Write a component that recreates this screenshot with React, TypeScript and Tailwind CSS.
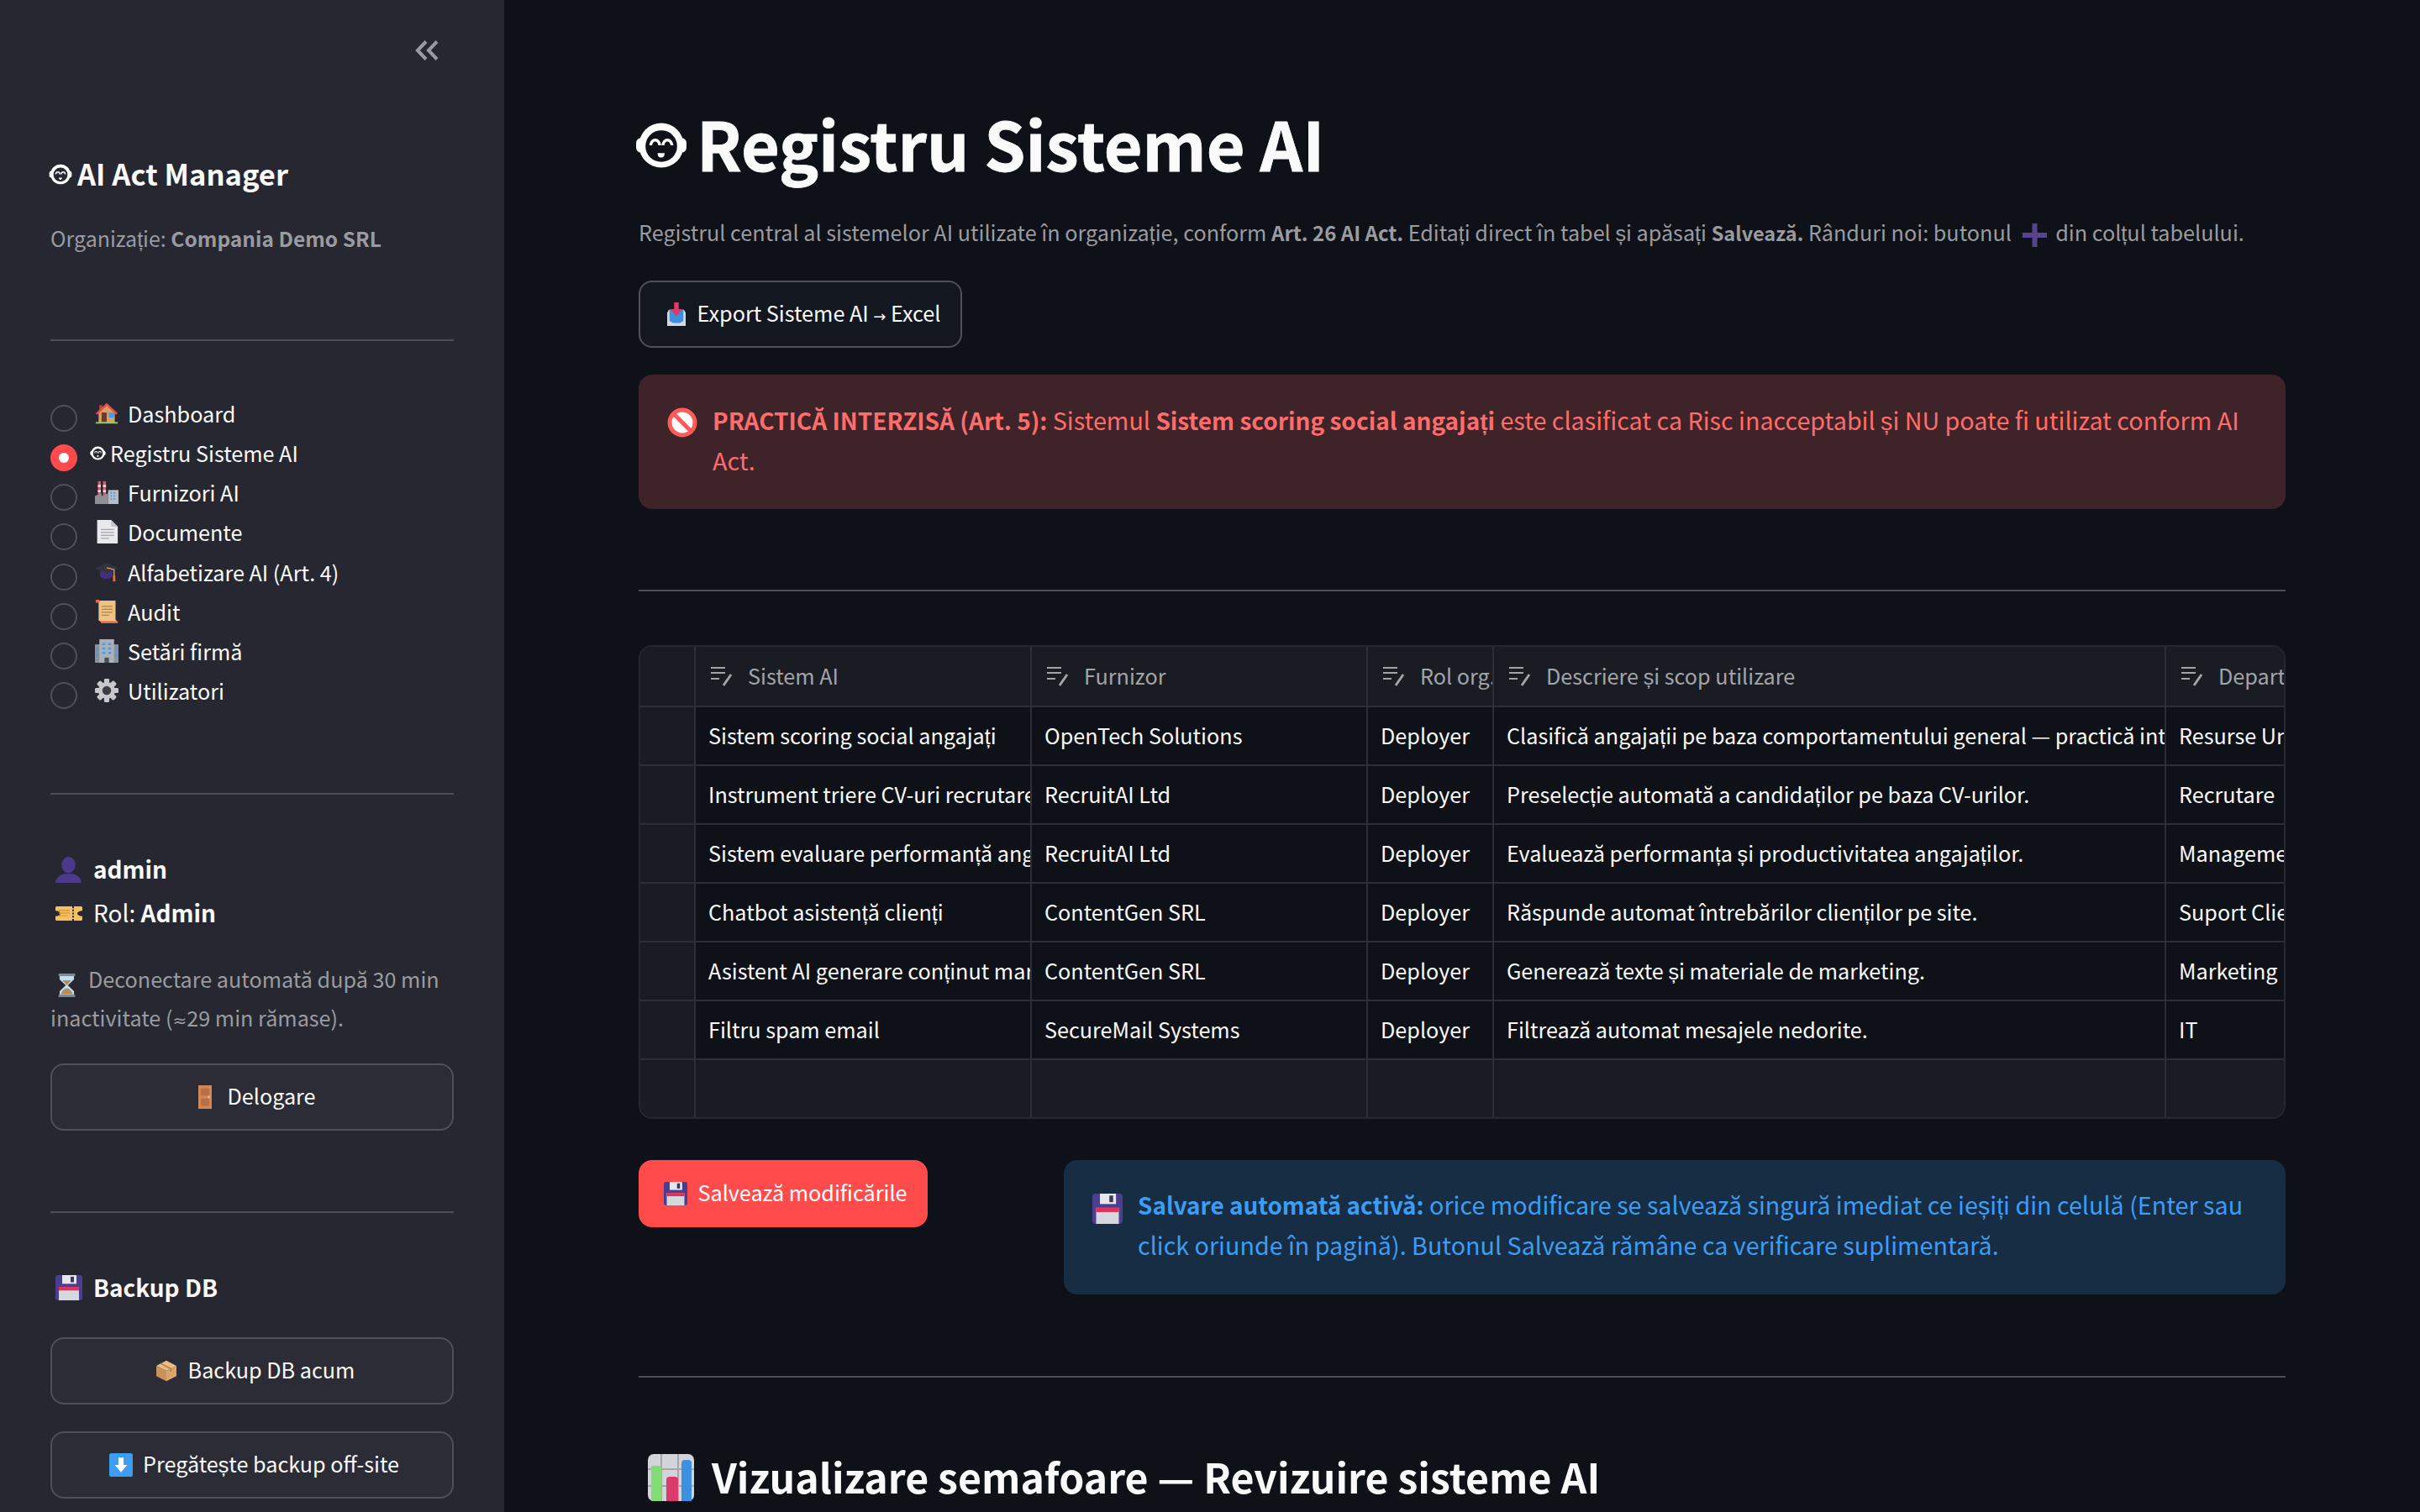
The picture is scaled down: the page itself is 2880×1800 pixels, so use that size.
import React from "react";

const Divider = ({ className = "" }: { className?: string }) => (
  <div className={`h-[2px] bg-[#4c4d55] shrink-0 ${className}`} />
);

const EditIcon = () => (
  <svg viewBox="0 0 28 24" className="w-[28px] h-[24px] shrink-0" fill="none" stroke="#a3a4a8" strokeWidth="2">
    <path d="M0 2h17M0 8h17M0 15h10" />
    <path d="M15 23l9-13" strokeWidth="3" />
  </svg>
);

type Box = { className: string };
const S = ({ className, children, vb = "0 0 32 32" }: Box & { children: React.ReactNode; vb?: string }) => (
  <svg viewBox={vb} preserveAspectRatio="none" className={`shrink-0 ${className}`}>
    {children}
  </svg>
);

const Robot = ({ className, bg }: Box & { bg: string }) => (
  <svg viewBox="5 9 64 58" className={`shrink-0 ${className}`}>
    <rect x="6" y="29" width="62" height="18" rx="6" fill="#fff" />
    <circle cx="37" cy="38" r="27.5" fill="#fff" />
    <circle cx="37" cy="39" r="19.5" fill={bg} />
    <path d="M24 38a5.5 6.5 0 0 1 11 0M39 38a5.5 6.5 0 0 1 11 0" fill="none" stroke="#fff" strokeWidth="3.5" />
    <path d="M32.5 47.5h8.5c0 4-1.5 5.5-4.2 5.5s-4.3-1.5-4.3-5.5z" fill="#fff" />
  </svg>
);

const Home = ({ className }: Box) => (
  <S className={className}>
    <rect x="6" y="5" width="4" height="9" fill="#a0583c" />
    <path d="M5 14L16 4l11 10v15H5z" fill="#d9a066" />
    <path d="M1 16L16 2l15 14-2 2L16 6 3 18z" fill="#ef4b4b" />
    <rect x="9" y="15" width="7" height="13" fill="#6b3a30" />
    <rect x="19" y="15" width="7" height="7" fill="#3d9df3" />
    <rect x="1" y="28" width="30" height="2" fill="#7fdc6a" />
  </S>
);
const Factory = ({ className }: Box) => (
  <S className={className}>
    <rect x="4" y="1" width="4" height="20" fill="#d9596a" />
    <rect x="4" y="6" width="4" height="3" fill="#e8e8ea" />
    <rect x="4" y="13" width="4" height="3" fill="#e8e8ea" />
    <rect x="11" y="1" width="4" height="20" fill="#d9596a" />
    <rect x="11" y="6" width="4" height="3" fill="#e8e8ea" />
    <rect x="11" y="13" width="4" height="3" fill="#e8e8ea" />
    <path d="M0 32V21l9-4v4l9-4v15z" fill="#8f9095" />
    <rect x="18" y="13" width="14" height="19" fill="#b7bcc2" />
    <path d="M21 16h2v2h-2zM25 16h2v2h-2zM21 20h2v2h-2zM25 20h2v2h-2zM21 24h2v2h-2zM25 24h2v2h-2z" fill="#3d9df3" />
  </S>
);
const Doc = ({ className }: Box) => (
  <S className={className}>
    <path d="M3 0h19l9 9v23H3z" fill="#e9e9ed" />
    <path d="M22 0l9 9h-9z" fill="#c4c4ca" />
    <path d="M8 13h18M8 17h18M8 21h18M8 25h11" stroke="#a5a5ab" strokeWidth="1.3" />
  </S>
);
const Cap = ({ className }: Box) => (
  <S className={className}>
    <path d="M7 15v9c5 4 12 4 17 0v-9z" fill="#43307c" />
    <path d="M0 11L16 3l16 8-16 8z" fill="#33343e" />
    <path d="M16 10l10 3v10" stroke="#f0a050" strokeWidth="1.6" fill="none" />
    <rect x="24.5" y="22" width="3.2" height="9" fill="#e8703c" />
  </S>
);
const Scroll = ({ className }: Box) => (
  <S className={className}>
    <path d="M1 1h27v26l3 3H8L5 28V4z" fill="#f0c281" />
    <path d="M1 0h5v4H1zM8 29h23v3H8z" fill="#e0694a" />
    <path d="M9 9h15M9 13h15M9 17h15M9 21h10" stroke="#a9835a" strokeWidth="1.5" />
  </S>
);
const Building = ({ className }: Box) => (
  <S className={className}>
    <rect x="0" y="7" width="32" height="25" fill="#8d9198" />
    <rect x="6" y="0" width="20" height="32" fill="#aab0b7" />
    <path d="M10 5h4v3h-4zM18 5h4v3h-4zM10 11h4v3h-4zM18 11h4v3h-4zM10 17h4v3h-4zM18 17h4v3h-4zM2 12h2v4H2zM28 12h2v4h-2zM2 20h2v4H2zM28 20h2v4h-2z" fill="#3d9df3" />
    <rect x="13" y="25" width="6" height="7" fill="#4a4c52" />
  </S>
);
const Gear = ({ className }: Box) => (
  <svg viewBox="0 0 32 32" className={`shrink-0 ${className}`}>
    <g fill="#c8c8cc">
      {[0, 45, 90, 135].map((a) => (
        <rect key={a} x="12.5" y="0" width="7" height="32" rx="1.5" transform={`rotate(${a} 16 16)`} />
      ))}
      <circle cx="16" cy="16" r="11.5" />
    </g>
    <circle cx="16" cy="16" r="6" fill="#3c3d45" />
  </svg>
);
const Person = ({ className }: Box) => (
  <S className={className}>
    <ellipse cx="16" cy="10" rx="8.5" ry="10" fill="#4b3a8c" />
    <path d="M0 32c1-8 7-10 11-11h10c4 1 10 3 11 11z" fill="#4b3a8c" />
  </S>
);
const Ticket = ({ className }: Box) => (
  <S className={className}>
    <path d="M1 0h30l1 2v8a6 6 0 0 0 0 12v8l-1 2H1l-1-2v-8a6 6 0 0 0 0-12V2z" fill="#f5c060" />
    <path d="M21 0v32" stroke="#26272f" strokeWidth="2" strokeDasharray="4 3" />
    <path d="M4 9h13M4 15h13M4 21h10" stroke="#d79a3a" strokeWidth="2.5" />
  </S>
);
const Hourglass = ({ className }: Box) => (
  <S className={className}>
    <path d="M3 3h26v5L18 16l11 8v5H3v-5l11-8L3 8z" fill="#bfe0ee" />
    <path d="M8 9h16l-8 7zM5 28c3-6 8-8 11-8s8 2 11 8z" fill="#b98a5a" />
    <rect x="1" y="0" width="30" height="3.5" fill="#7d8a94" />
    <rect x="1" y="28.5" width="30" height="3.5" fill="#7d8a94" />
  </S>
);
const Door = ({ className }: Box) => (
  <S className={className}>
    <rect width="32" height="32" fill="#d28654" />
    <path d="M6 4h20v10H6zM6 18h20v10H6z" fill="#b96e46" />
    <circle cx="25" cy="16" r="2" fill="#f3c48a" />
  </S>
);
const Floppy = ({ className }: Box) => (
  <S className={className}>
    <path d="M2 0h28l2 2v28l-2 2H2l-2-2V2z" fill="#4c3e8e" />
    <rect x="8" y="0" width="17" height="11" fill="#e6e6ee" />
    <rect x="18" y="2" width="4" height="7" fill="#3d3a55" />
    <rect x="4" y="15" width="24" height="17" fill="#d5d8dd" />
    <rect x="4" y="15" width="24" height="4.5" fill="#e0305f" />
  </S>
);
const BoxIcon = ({ className }: Box) => (
  <S className={className}>
    <path d="M0 9L16 2l16 7-16 7z" fill="#e9bd85" />
    <path d="M0 9l16 7v14L0 23z" fill="#c99259" />
    <path d="M32 9L16 16v14l16-7z" fill="#dba56a" />
    <path d="M7 6l16 7v4" stroke="#b9824c" strokeWidth="2" fill="none" />
  </S>
);
const Down = ({ className }: Box) => (
  <S className={className}>
    <rect width="32" height="32" rx="3" fill="#3d9df3" />
    <path d="M12.5 6h7v10h5L16 26 7.5 16h5z" fill="#fff" />
  </S>
);
const Inbox = ({ className }: Box) => (
  <S className={className}>
    <path d="M3 10h26l3 4v18H0V14z" fill="#d5d8de" />
    <path d="M4 10h24v15l-6 3H10l-6-3z" fill="#3d8fe0" />
    <rect x="12" y="0" width="8" height="10" fill="#dc3a6c" />
    <path d="M6 9h20L16 19z" fill="#dc3a6c" />
  </S>
);
const NoEntry = ({ className }: Box) => (
  <svg viewBox="0 0 36 36" className={`shrink-0 ${className}`}>
    <circle cx="18" cy="18" r="15" fill="#fff" stroke="#ff5a5a" strokeWidth="5" />
    <path d="M7.5 7.5l21 21" stroke="#ff5a5a" strokeWidth="5" />
  </svg>
);
const Plus = ({ className }: Box) => (
  <svg viewBox="0 0 29 28" className={`inline-block align-[-3px] -my-[4px] ${className}`}>
    <path d="M11.5 0h6v11h11.5v6H17.5v11h-6V17H0v-6h11.5z" fill="#56448f" />
  </svg>
);
const Chart = ({ className }: Box) => (
  <S className={className} vb="0 0 55 56">
    <rect width="55" height="56" rx="7" fill="#d3d3da" />
    <path d="M16 0v56M36 0v56M0 18h55M0 38h55" stroke="#a5a5ab" strokeWidth="2" />
    <path d="M4 14h12v42H4z" fill="#82dc74" />
    <path d="M22 31a4 4 0 0 1 4-4h6a4 4 0 0 1 4 4v25H22z" fill="#dc3a6c" />
    <path d="M40 11a4 4 0 0 1 4-4h4a4 4 0 0 1 4 4v45H40z" fill="#3d90e0" />
  </S>
);

const Button = ({ icon, children, className = "", gap = "gap-[14px]" }: { icon: React.ReactNode; children: React.ReactNode; className?: string; gap?: string }) => (
  <div className={`h-[80px] shrink-0 rounded-[16px] border-2 border-[#4f5058] bg-[#2b2c36] flex items-center justify-center text-[25.2px] text-[#fafafa] ${gap} ${className}`}>
    {icon}
    <span className="pb-[3px]">{children}</span>
  </div>
);

const nav: [React.ReactNode, string][] = [
  [<Home className="w-[28px] h-[28px]" />, "Dashboard"],
  [null, "Registru Sisteme AI"],
  [<Factory className="w-[28px] h-[28px]" />, "Furnizori AI"],
  [<Doc className="w-[28px] h-[28px]" />, "Documente"],
  [<Cap className="w-[28px] h-[25px]" />, "Alfabetizare AI (Art. 4)"],
  [<Scroll className="w-[28px] h-[28px]" />, "Audit"],
  [<Building className="w-[28px] h-[28px]" />, "Setări firmă"],
  [<Gear className="w-[28px] h-[28px]" />, "Utilizatori"],
];

const columns = ["Sistem AI", "Furnizor", "Rol org.", "Descriere și scop utilizare", "Departament"];
const rows = [
  ["Sistem scoring social angajați", "OpenTech Solutions", "Deployer", "Clasifică angajații pe baza comportamentului general — practică interzisă.", "Resurse Umane"],
  ["Instrument triere CV-uri recrutare", "RecruitAI Ltd", "Deployer", "Preselecție automată a candidaților pe baza CV-urilor.", "Recrutare"],
  ["Sistem evaluare performanță angajați", "RecruitAI Ltd", "Deployer", "Evaluează performanța și productivitatea angajaților.", "Management"],
  ["Chatbot asistență clienți", "ContentGen SRL", "Deployer", "Răspunde automat întrebărilor clienților pe site.", "Suport Clienți"],
  ["Asistent AI generare conținut marketing", "ContentGen SRL", "Deployer", "Generează texte și materiale de marketing.", "Marketing"],
  ["Filtru spam email", "SecureMail Systems", "Deployer", "Filtrează automat mesajele nedorite.", "IT"],
];

export default function App() {
  return (
    <div className="flex w-[2880px] h-[1800px] overflow-hidden bg-[#0e1117] text-[#fafafa] font-['Noto_Sans_CJK_SC',sans-serif]">
      <aside className="w-[600px] shrink-0 h-full bg-[#262730] px-[60px] pt-[48px] flex flex-col">
        <div className="flex justify-end pr-[18px] h-[24px]">
          <svg viewBox="0 0 28 24" className="w-[28px] h-[24px]" fill="none" stroke="#9a9ba0" strokeWidth="4">
            <path d="M13 1.5L3 12l10 10.5M26 1.5L16 12l10 10.5" />
          </svg>
        </div>
        <div className="mt-[107px] h-[56px] leading-[56px] text-[34.5px] font-semibold flex items-center gap-[6px] -ml-[2px]">
          <Robot className="w-[28px] h-[25px]" bg="#262730" />
          <span className="pb-[3px]">AI Act Manager</span>
        </div>
        <div className="mt-[26px] mb-[2px] h-[44px] leading-[44px] text-[25px] text-[#9a9ba0]">
          Organizație: <b className="font-semibold text-[24.5px] leading-none">Compania Demo SRL</b>
        </div>
        <Divider className="mt-[97px]" />
        <div className="mt-[76px] flex flex-col">
          {nav.map(([ic, t], i) => (
            <div key={t} className="h-[47.14px] flex items-start">
              {i === 1 ? (
                <div className="w-[32px] h-[32px] rounded-full bg-[#ff4b4b] flex items-center justify-center shrink-0">
                  <div className="w-[12px] h-[12px] rounded-full bg-white" />
                </div>
              ) : (
                <div className="w-[32px] h-[32px] rounded-full border-2 border-[#4f5058] shrink-0" />
              )}
              <div className={`-mt-[6px] h-[32px] leading-[32px] text-[25.2px] flex items-center ${i === 1 ? "ml-[15px] gap-[5px]" : "ml-[21px] gap-[11px]"}`}>
                {i === 1 ? <Robot className="w-[19px] h-[17px]" bg="#262730" /> : ic}
                <span>{t}</span>
              </div>
            </div>
          ))}
        </div>
        <Divider className="mt-[85px]" />
        <div className="mt-[63px] h-[52px] text-[28px] font-semibold pl-[6px] flex items-center gap-[14px]">
          <Person className="w-[31px] h-[31px]" />
          <span className="pb-[3px]">admin</span>
        </div>
        <div className="h-[52px] text-[28px] pl-[6px] flex items-center gap-[13px]">
          <Ticket className="w-[32px] h-[17px]" />
          <span className="pb-[2px]">
            Rol: <b className="font-semibold">Admin</b>
          </span>
        </div>
        <div className="mt-[29px] leading-[46px] text-[25.2px] text-[#9a9ba0]">
          <Hourglass className="inline-block align-[-5px] -my-[6px] w-[21px] h-[28px] ml-[9px] mr-[15px]" />
          Deconectare automată după 30 min inactivitate (<span className="font-['DejaVu_Sans'] text-[20px] leading-none">≈</span>29 min rămase).
        </div>
        <Button icon={<Door className="w-[16px] h-[28px]" />} gap="gap-[18px]" className="mt-[32px] pl-[12px]">
          Delogare
        </Button>
        <Divider className="mt-[96px]" />
        <div className="mt-[63px] h-[52px] text-[28px] font-semibold pl-[6px] flex items-center gap-[13px]">
          <Floppy className="w-[32px] h-[30px]" />
          <span className="pb-[3px]">Backup DB</span>
        </div>
        <Button icon={<BoxIcon className="w-[24px] h-[28px]" />} className="mt-[33px] pl-[8px]">
          Backup DB acum
        </Button>
        <Button icon={<Down className="w-[28px] h-[28px]" />} gap="gap-[12px]" className="mt-[32px] pl-[5px]">
          Pregătește backup off-site
        </Button>
      </aside>

      <main className="flex-1 min-w-0 px-[160px] pt-[123px] flex flex-col">
        <h1 className="h-[100px] leading-[100px] text-[79px] font-bold flex items-center gap-[11px] -ml-[4px]">
          <Robot className="w-[62px] h-[56px]" bg="#0e1117" />
          <span className="pb-[7px] [-webkit-text-stroke:0.8px_#fafafa]">Registru Sisteme AI</span>
        </h1>
        <p className="mt-[31px] mb-[3px] h-[44px] leading-[44px] text-[25.2px] text-[#9a9ba0] whitespace-nowrap">
          Registrul central al sistemelor AI utilizate în organizație, conform <b className="font-semibold text-[24px] leading-none">Art. 26 AI Act.</b> Editați direct în tabel și apăsați{" "}
          <b className="font-semibold text-[23.5px] leading-none">Salvează.</b> Rânduri noi: butonul <Plus className="w-[29px] h-[28px] ml-[7px] mr-[5px]" /> din colțul tabelului.
        </p>
        <div className="mt-[33px] w-[385px] h-[80px] rounded-[16px] border-2 border-[#4f5058] bg-[#131720] flex items-center justify-center gap-[14px] text-[25.2px] pl-[8px]">
          <Inbox className="w-[22px] h-[28px]" />
          <span className="pb-[3px]">
            Export Sisteme AI <span className="font-['DejaVu_Sans'] text-[18px] leading-none">→</span> Excel
          </span>
        </div>
        <div className="mt-[32px] rounded-[16px] bg-[#3e2428] text-[#ff6c6c] pl-[34px] pr-[32px] pt-[30px] pb-[34px] flex gap-[18px] text-[28.7px] leading-[48px]">
          <NoEntry className="w-[36px] h-[36px] mt-[9px]" />
          <p>
            <b className="font-semibold text-[28px] leading-none">PRACTICĂ INTERZISĂ (Art. 5):</b> Sistemul <b className="font-semibold text-[28px] leading-none">Sistem scoring social angajați</b> este clasificat ca Risc inacceptabil și NU poate fi utilizat conform AI Act.
          </p>
        </div>
        <Divider className="mt-[96px] bg-[#3a3c42]" />
        <div className="mt-[64px] rounded-[16px] border-2 border-[#26282f] overflow-hidden grid grid-cols-[66px_400px_400px_150px_800px_1fr] grid-rows-[72px_repeat(6,70px)_68px] text-[25.2px]">
          <div className="bg-[#1a1c24] border-r-2 border-b-2 border-[#2c2e35]" />
          {columns.map((c, i) => (
            <div
              key={c}
              className={`bg-[#1a1c24] border-b-2 border-[#2c2e35] pl-[18px] flex items-center gap-[16px] overflow-hidden whitespace-nowrap text-[#a3a4a8] ${i < 4 ? "border-r-2" : ""}`}
            >
              <EditIcon />
              <span>{c}</span>
            </div>
          ))}
          {rows.map((r) => (
            <React.Fragment key={r[0]}>
              <div className="bg-[#1a1c24] border-r-2 border-b-2 border-[#2c2e35]" />
              {r.map((c, i) => (
                <div
                  key={i}
                  className={`bg-[#0e1117] border-b-2 border-[#2c2e35] pl-[15px] flex items-center overflow-hidden whitespace-nowrap ${i < 4 ? "border-r-2" : ""}`}
                >
                  {c}
                </div>
              ))}
            </React.Fragment>
          ))}
          <div className="bg-[#1a1c24] border-r-2 border-[#2c2e35]" />
          {[0, 1, 2, 3, 4].map((i) => (
            <div key={i} className={`bg-[#1a1c24] border-[#2c2e35] ${i < 4 ? "border-r-2" : ""}`} />
          ))}
        </div>
        <div className="mt-[49px] flex items-start justify-between">
          <div className="w-[344px] h-[80px] rounded-[16px] bg-[#ff4b4b] text-white flex items-center justify-center gap-[12px] text-[25.2px] pl-[6px]">
            <Floppy className="w-[28px] h-[28px]" />
            <span className="pb-[3px]">Salvează modificările</span>
          </div>
          <div className="w-[1454px] rounded-[16px] bg-[#172d43] text-[#3d9df3] pl-[34px] pr-[32px] pt-[29px] pb-[35px] flex gap-[18px] text-[28.7px] leading-[48px]">
            <Floppy className="w-[36px] h-[36px] mt-[11px]" />
            <p>
              <b className="font-semibold text-[27.9px] leading-none">Salvare automată activă:</b> orice modificare se salvează singură imediat ce ieșiți din celulă (Enter sau click oriunde în pagină). Butonul Salvează rămâne ca verificare suplimentară.
            </p>
          </div>
        </div>
        <Divider className="mt-[97px] bg-[#3a3c42]" />
        <h2 className="mt-[83px] h-[72px] leading-[72px] text-[48.2px] font-semibold flex items-center gap-[21px] pl-[11px] whitespace-nowrap">
          <Chart className="w-[55px] h-[56px]" />
          <span className="pb-[5px]">Vizualizare semafoare — Revizuire sisteme AI</span>
        </h2>
      </main>
    </div>
  );
}
